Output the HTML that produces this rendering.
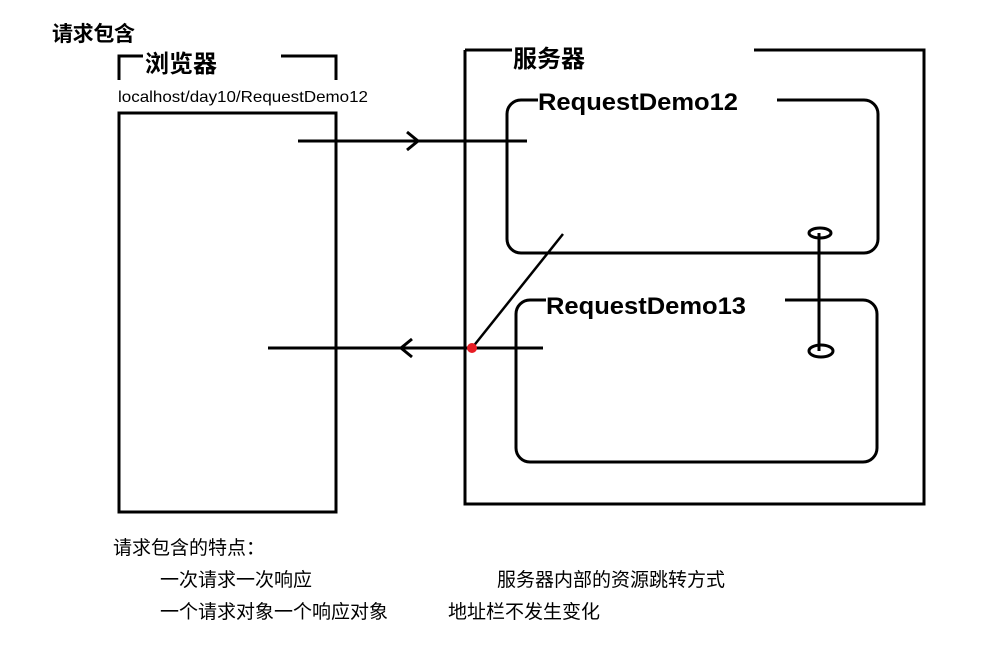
<!DOCTYPE html>
<html><head><meta charset="utf-8"><style>
body{margin:0;background:#fff;width:992px;height:672px;overflow:hidden}
svg{display:block}
.b{font-family:"Liberation Sans","Noto Sans CJK SC",sans-serif;font-weight:bold;fill:#000}
.n{font-family:"Liberation Sans","Noto Sans CJK SC",sans-serif;fill:#000}
</style></head><body>
<svg width="992" height="672" viewBox="0 0 992 672" xmlns="http://www.w3.org/2000/svg">
<g fill="none" stroke="#000" stroke-width="3">
<path d="M119 80V56H143M281 56H336V80"/>
<rect x="119" y="113" width="217" height="399"/>
<path d="M465 50H512M754 50H924V504H465V50"/>
<path d="M538 100H521A14 14 0 0 0 507 114V239A14 14 0 0 0 521 253H864A14 14 0 0 0 878 239V114A14 14 0 0 0 864 100H777"/>
<path d="M546 300H530A14 14 0 0 0 516 314V448A14 14 0 0 0 530 462H863A14 14 0 0 0 877 448V314A14 14 0 0 0 863 300H785"/>
<path d="M298 141H527M407 132L418 141L407 150"/>
<path d="M268 348H543M412 339L401 348L412 357"/>
<path d="M563 234L472 348" stroke-width="2.5"/>
<path d="M819 233V351"/>
<ellipse cx="820" cy="233" rx="11" ry="5"/>
<ellipse cx="821" cy="351" rx="12" ry="6"/>
</g>
<circle cx="472" cy="348" r="5" fill="#e81c24"/>
<text class="b" x="52" y="41" font-size="21" textLength="83">请求包含</text>
<text class="b" x="145" y="72" font-size="24" textLength="72">浏览器</text>
<text class="n" x="118" y="102" font-size="16" textLength="250" lengthAdjust="spacingAndGlyphs">localhost/day10/RequestDemo12</text>
<text class="b" x="513" y="67" font-size="24" textLength="72">服务器</text>
<text class="b" x="538" y="110" font-size="24" textLength="200" lengthAdjust="spacingAndGlyphs">RequestDemo12</text>
<text class="b" x="546" y="314" font-size="24" textLength="200" lengthAdjust="spacingAndGlyphs">RequestDemo13</text>
<text class="n" x="113" y="554" font-size="19">请求包含的特点：</text>
<text class="n" x="160" y="586" font-size="19">一次请求一次响应</text>
<text class="n" x="497" y="586" font-size="19">服务器内部的资源跳转方式</text>
<text class="n" x="160" y="618" font-size="19">一个请求对象一个响应对象</text>
<text class="n" x="448" y="618" font-size="19">地址栏不发生变化</text>
</svg>
</body></html>
